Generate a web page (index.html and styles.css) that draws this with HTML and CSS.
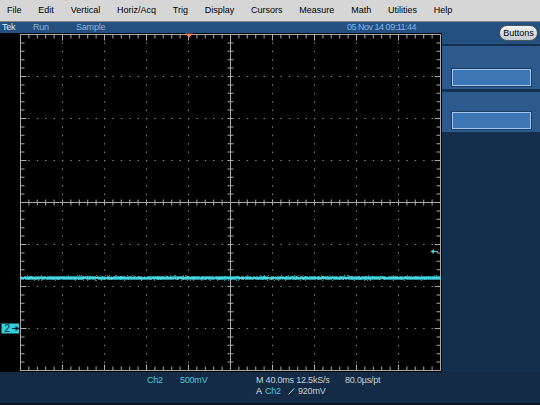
FILE: index.html
```html
<!DOCTYPE html>
<html>
<head>
<meta charset="utf-8">
<link rel="stylesheet" href="styles.css">
</head>
<body>
<div class="menubar">
  <span>File</span><span>Edit</span><span>Vertical</span><span>Horiz/Acq</span><span>Trig</span><span>Display</span><span>Cursors</span><span>Measure</span><span>Math</span><span>Utilities</span><span>Help</span>
</div>
<div class="main">
  <div class="left">
    <div class="status">
      <span class="tek">Tek</span><span class="run">Run</span><span class="sample">Sample</span><span class="date">05 Nov 14 09:11:44</span>
    </div>
    <div class="screen">
      <svg class="grat" width="442" height="339" viewBox="0 0 442 339">
        <defs>
          <filter id="noise" filterUnits="userSpaceOnUse" x="0" y="230" width="442" height="30">
            <feTurbulence type="fractalNoise" baseFrequency="0.7 0.9" numOctaves="2" seed="4" result="n"/>
            <feDisplacementMap in="SourceGraphic" in2="n" scale="3" xChannelSelector="R" yChannelSelector="G"/>
          </filter>
        </defs>
        <g stroke="#8a8a8a" stroke-width="1" stroke-dasharray="1.4 7">
          <line x1="62.5" y1="1" x2="62.5" y2="338"/>
          <line x1="104.5" y1="1" x2="104.5" y2="338"/>
          <line x1="146.5" y1="1" x2="146.5" y2="338"/>
          <line x1="188.5" y1="1" x2="188.5" y2="338"/>
          <line x1="272.5" y1="1" x2="272.5" y2="338"/>
          <line x1="314.5" y1="1" x2="314.5" y2="338"/>
          <line x1="356.5" y1="1" x2="356.5" y2="338"/>
          <line x1="398.5" y1="1" x2="398.5" y2="338"/>
          <line x1="20" y1="43.5" x2="441" y2="43.5"/>
          <line x1="20" y1="85.5" x2="441" y2="85.5"/>
          <line x1="20" y1="127.5" x2="441" y2="127.5"/>
          <line x1="20" y1="211.5" x2="441" y2="211.5"/>
          <line x1="20" y1="253.5" x2="441" y2="253.5"/>
          <line x1="20" y1="295.5" x2="441" y2="295.5"/>
        </g>
        <g stroke="#ababab" stroke-width="1" fill="none">
          <line x1="20" y1="169.5" x2="441" y2="169.5"/>
          <line x1="230.5" y1="1" x2="230.5" y2="338"/>
          <rect x="20.5" y="1.5" width="420" height="336"/>
        </g>
        <g stroke="#ababab" stroke-dasharray="1 7.4">
          <line x1="20" y1="169.5" x2="441" y2="169.5" stroke-width="6"/>
          <line x1="230.5" y1="1" x2="230.5" y2="338" stroke-width="6"/>
          <line x1="20" y1="3.5" x2="441" y2="3.5" stroke-width="4"/>
          <line x1="20" y1="335.5" x2="441" y2="335.5" stroke-width="4"/>
          <line x1="22.5" y1="1" x2="22.5" y2="338" stroke-width="4"/>
          <line x1="438.5" y1="1" x2="438.5" y2="338" stroke-width="4"/>
        </g>
        <g stroke="#ababab" stroke-dasharray="1 41">
          <line x1="20" y1="4.5" x2="441" y2="4.5" stroke-width="6"/>
          <line x1="20" y1="334.5" x2="441" y2="334.5" stroke-width="6"/>
          <line x1="23.5" y1="1" x2="23.5" y2="338" stroke-width="6"/>
          <line x1="437.5" y1="1" x2="437.5" y2="338" stroke-width="6"/>
        </g>
        <rect x="20" y="243.3" width="421" height="3.4" fill="#34cdd8" filter="url(#noise)"/>
        <line x1="20" y1="245" x2="441" y2="245" stroke="#62e2ea" stroke-width="1.2"/>
        <polygon points="185,0.5 193,0.5 189,4.8" fill="#f07a5a"/>
        <g class="level">
          <line x1="432" y1="218.5" x2="438" y2="218.5" stroke="#3fd0d8" stroke-width="1"/>
          <polygon points="430.5,218.5 434,216 434,221" fill="#3fd0d8"/>
        </g>
        <rect x="1.5" y="290.5" width="17.5" height="10" fill="#33d0dc"/>
        <text x="4.5" y="299" class="gnd">2</text>
        <line x1="12" y1="295.5" x2="18" y2="295.5" stroke="#0c2238" stroke-width="1"/>
        <polygon points="19.5,295.5 15.5,293 15.5,298" fill="#0c2238"/>
      </svg>
    </div>
  </div>
  <div class="side">
    <div class="side-top"><span class="pill">Buttons</span></div>
    <div class="sep"></div>
    <div class="section s1"><div class="sbtn"></div></div>
    <div class="sep thick"></div>
    <div class="section s2"><div class="sbtn"></div></div>
    <div class="side-rest"></div>
  </div>
</div>
<div class="readout">
  <div class="ch"><span class="cy">Ch2</span><span class="cy volts">500mV</span></div>
  <div class="tb">
    <div class="row"><span class="hz">M 40.0ms 12.5kS/s</span><span>80.0µs/pt</span></div>
    <div class="row"><span class="a">A</span><span class="cy ch2">Ch2</span><svg class="slope" width="7" height="8" viewBox="0 0 7 8"><path d="M0.5 7.5 L6 1.5" stroke="#c8d0d8" stroke-width="1" fill="none"/></svg><span>920mV</span></div>
  </div>
</div>
<div class="bottomline"></div>
</body>
</html>
```

FILE: styles.css
```css
html, body {
  margin: 0;
  padding: 0;
}
body {
  width: 540px;
  height: 405px;
  overflow: hidden;
  background: #142b45;
  font-family: "Liberation Sans", Arial, sans-serif;
  font-size: 9px;
}
.menubar {
  box-sizing: border-box;
  padding: 5px 0 0 7px;
  line-height: 11px;
  background: #d6d6d6;
  border-bottom: 1px solid #8a8a8a;
  height: 22px;
  display: flex;
  gap: 16.8px;
  color: #000;
}
.main {
  display: flex;
  height: 350px;
}
.left {
  width: 442px;
  display: flex;
  flex-direction: column;
}
.status {
  height: 11px;
  line-height: 11px;
  background: #23507f;
  display: flex;
  padding-left: 2px;
  letter-spacing: -0.2px;
}
.tek { color: #e2eaf2; width: 31px; }
.run { color: #8cb2da; width: 43px; }
.sample { color: #8cb2da; }
.date {
  color: #80b4ec;
  margin-left: auto;
  margin-right: 26px;
  letter-spacing: -0.5px;
}
.screen {
  height: 339px;
  background: #000;
}
.grat { display: block; }
.gnd {
  font-family: "Liberation Sans", Arial, sans-serif;
  font-size: 10px;
  fill: #0c2238;
}
.side {
  flex: 1;
  display: flex;
  flex-direction: column;
}
.side-top {
  height: 22px;
  background: #23507f;
  display: flex;
  justify-content: flex-end;
  align-items: flex-start;
  padding: 3px 2px 0 0;
  box-sizing: border-box;
}
.pill {
  width: 39px;
  height: 16px;
  box-sizing: border-box;
  line-height: 14px;
  text-align: center;
  border: 1px solid #4a5566;
  border-radius: 8px;
  background: linear-gradient(#f2f2f2, #c6cacf);
  color: #000;
  font-size: 9px;
}
.sep { height: 2px; background: #15304e; }
.sep.thick { height: 3px; }
.section {
  background: #2c5a8c;
  display: flex;
  flex-direction: column;
  justify-content: flex-end;
  padding: 0 0 3px 10px;
  box-sizing: border-box;
}
.s1 { height: 43px; }
.s2 { height: 40px; }
.sbtn {
  width: 79px;
  height: 17px;
  box-sizing: border-box;
  background: #3d76b4;
  border: 1px solid #9ec6ee;
  box-shadow: 0 0 0 1px #1c3c60;
}
.side-rest {
  flex: 1;
  background: #142f4d;
}
.readout {
  height: 31px;
  box-sizing: border-box;
  padding: 3px 0 0 147px;
  display: flex;
  line-height: 10.5px;
  letter-spacing: -0.2px;
  color: #c8d0d8;
  background: #142b45;
}
.ch {
  width: 109px;
  display: flex;
}
.cy { color: #52c6da; }
.volts { margin-left: 17px; }
.row { display: flex; align-items: center; }
.hz { width: 89px; }
.a { color: #e8eef2; width: 9px; }
.ch2 { width: 23px; }
.slope { margin-right: 3px; }
.bottomline {
  height: 2px;
  background: #0a1828;
}
```
